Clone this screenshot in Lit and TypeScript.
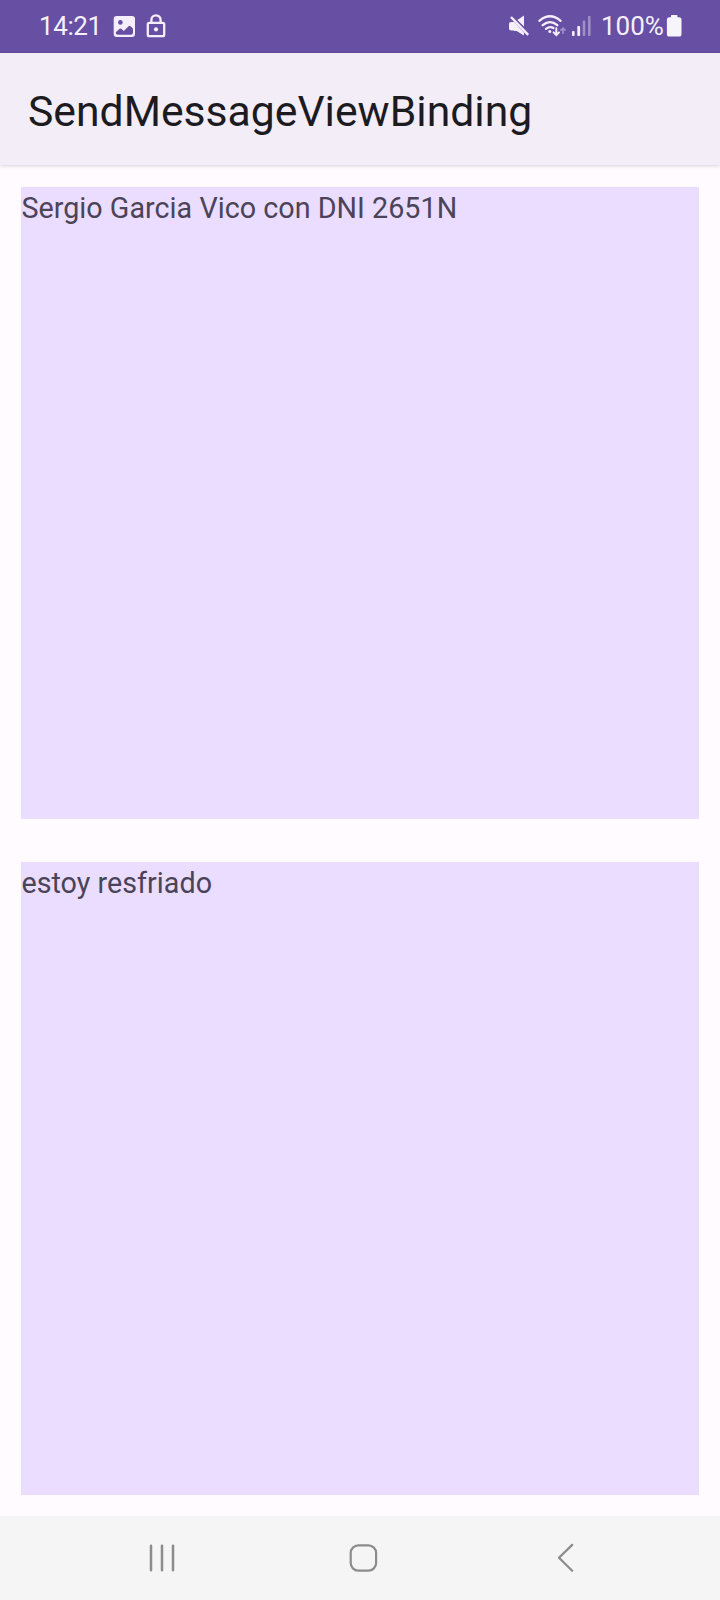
import { LitElement, html, css } from "lit";
import { customElement, property } from "lit/decorators.js";

@customElement("status-bar")
class StatusBar extends LitElement {
  static styles = css`
    :host { display: flex; justify-content: space-between; align-items: center; height: 53px; box-sizing: border-box; padding: 0 38px 0 39px; background: #674fa3; color: #f5effc; font: 26px/53px Roboto, sans-serif; }
    .group { display: flex; align-items: center; height: 53px; }
    svg { display: block; flex: none; }
    .time { width: 64px; white-space: nowrap; letter-spacing: -0.4px; }
    .picture { margin-left: 10px; }
    .lock { margin-left: 10px; }
    .wifi { margin-left: 7px; }
    .signal { margin-left: 4px; }
    .percent { width: 65px; margin-left: 9px; white-space: nowrap; }
  `;
  render() {
    return html`
      <div class="group">
        <span class="time">14:21</span>
        <svg class="picture" width="23" height="53" viewBox="113 0 23 53">
          <rect x="113.7" y="16" width="21.3" height="21" rx="3" fill="#f5effc" />
          <circle cx="120.4" cy="22.4" r="2.3" fill="#674fa3" />
          <path d="M115.8 32.2L119.6 28.8Q120.6 28 121.6 28.9L123.8 31L128.6 26.2Q129.6 25.4 130.6 26.3L133 28.8V32.8Q133 34.8 131 34.8H117.8Q115.8 34.8 115.8 32.6Z" fill="#674fa3" />
        </svg>
        <svg class="lock" width="20" height="53" viewBox="146 0 20 53" fill="none" stroke="#f5effc" stroke-width="2.3">
          <rect x="147.8" y="22.8" width="16.4" height="13.4" rx="1.4" />
          <path d="M151.4 23V19.9a4.6 4.6 0 0 1 9.2 0V23" />
          <circle cx="156" cy="29.4" r="2.1" fill="#f5effc" stroke="none" />
        </svg>
      </div>
      <div class="group">
        <svg width="23" height="53" viewBox="508 0 23 53">
          <path d="M517.4 20L524 15.6V26.6ZM509 24Q509 22 511 22H514L524 32.6V35.4L515.8 30.6H511Q509 30.6 509 28.6Z" fill="#f5effc" />
          <path d="M511 17L528.2 34.8" stroke="#f5effc" stroke-width="2.4" />
          <path d="M514 22L519 27.2V31H514Z" fill="#f5effc" />
        </svg>
        <svg class="wifi" width="29" height="53" viewBox="538 0 29 53" fill="none" stroke="#f5effc" stroke-width="2.3" stroke-linecap="round">
          <path d="M539.4 20.8Q550 11.8 560.6 20.8M542.7 25.2Q550 19 557.3 25.2M546 28.8Q550 25.8 553.4 28" />
          <circle cx="549.8" cy="31.6" r="1.5" fill="#f5effc" stroke="none" />
          <path d="M556.3 28.2V34.8M553.6 32.4L556.3 35.1L559 32.4" stroke-width="2" />
          <path d="M563 33.2V28.6M560.9 30.2L563 28.1L565.1 30.2" stroke-width="1.7" opacity=".4" />
        </svg>
        <svg class="signal" width="21" height="53" viewBox="571 0 21 53" fill="#f5effc">
          <rect x="572" y="31" width="2.6" height="5" rx=".8" />
          <rect x="577.3" y="26" width="2.8" height="10" rx=".8" />
          <rect x="582.7" y="20.6" width="2.6" height="15.4" rx=".8" opacity=".4" />
          <rect x="588" y="16" width="2.6" height="20" rx=".8" opacity=".4" />
        </svg>
        <span class="percent">100%</span>
        <svg width="16" height="53" viewBox="666 0 16 53" fill="#f8f4fc">
          <path d="M671 15.6Q671 15 671.6 15H676.8Q677.4 15 677.4 15.6V17.3H679Q681.5 17.3 681.5 19.8V34Q681.5 36.6 679 36.6H669.4Q666.9 36.6 666.9 34V19.8Q666.9 17.3 669.4 17.3H671Z" />
        </svg>
      </div>`;
  }
}

@customElement("message-panel")
class MessagePanel extends LitElement {
  @property() text = "";
  static styles = css`
    :host { display: block; background: #eaddff; color: #4b4458; font: 28.7px/42px Roboto, sans-serif; letter-spacing: 0.03px; }
    .text { display: block; padding-left: 0.4px; }
  `;
  render() {
    return html`<span class="text">${this.text}</span>`;
  }
}

@customElement("nav-bar")
class NavBar extends LitElement {
  static styles = css`
    :host { display: flex; align-items: center; height: 84px; background: #f5f5f5; }
    svg { display: block; margin-left: 146px; }
    .home { margin-left: 170px; }
    .back { margin-left: 176px; }
  `;
  render() {
    return html`
      <svg width="32" height="84" viewBox="146 1516 32 84" stroke="#8c8c8c" stroke-width="2.5" stroke-linecap="round">
        <path d="M151 1545.7V1570.2M162 1545.7V1570.2M173 1545.7V1570.2" />
      </svg>
      <svg class="home" width="32" height="84" viewBox="348 1516 32 84" fill="none" stroke="#8c8c8c" stroke-width="2.2">
        <rect x="350.7" y="1545.4" width="25.4" height="25.2" rx="7.6" />
      </svg>
      <svg class="back" width="22" height="84" viewBox="556 1516 22 84" fill="none" stroke="#8c8c8c" stroke-width="2.3" stroke-linecap="round" stroke-linejoin="round">
        <path d="M572.2 1544.9L559 1557.8L572.2 1570.7" />
      </svg>`;
  }
}

@customElement("app-root")
class AppRoot extends LitElement {
  static styles = css`
    :host { display: flex; flex-direction: column; height: 1600px; background: #fffbff; }
    .toolbar { position: relative; height: 112px; box-sizing: border-box; padding-left: 28px; background: #f3edf7; color: #1c1b1f; font: 42.7px/117px Roboto, sans-serif; white-space: nowrap; box-shadow: 0 1px 3px rgba(0,0,0,.12), 0 2px 6px rgba(0,0,0,.04); }
    .content { flex: 1; display: grid; grid-template-rows: 632px 1fr; gap: 43px; padding: 22px 21px 21px; }
  `;
  render() {
    return html`
      <status-bar></status-bar>
      <div class="toolbar">SendMessageViewBinding</div>
      <div class="content">
        <message-panel text="Sergio Garcia Vico con DNI 2651N"></message-panel>
        <message-panel text="estoy resfriado"></message-panel>
      </div>
      <nav-bar></nav-bar>`;
  }
}
